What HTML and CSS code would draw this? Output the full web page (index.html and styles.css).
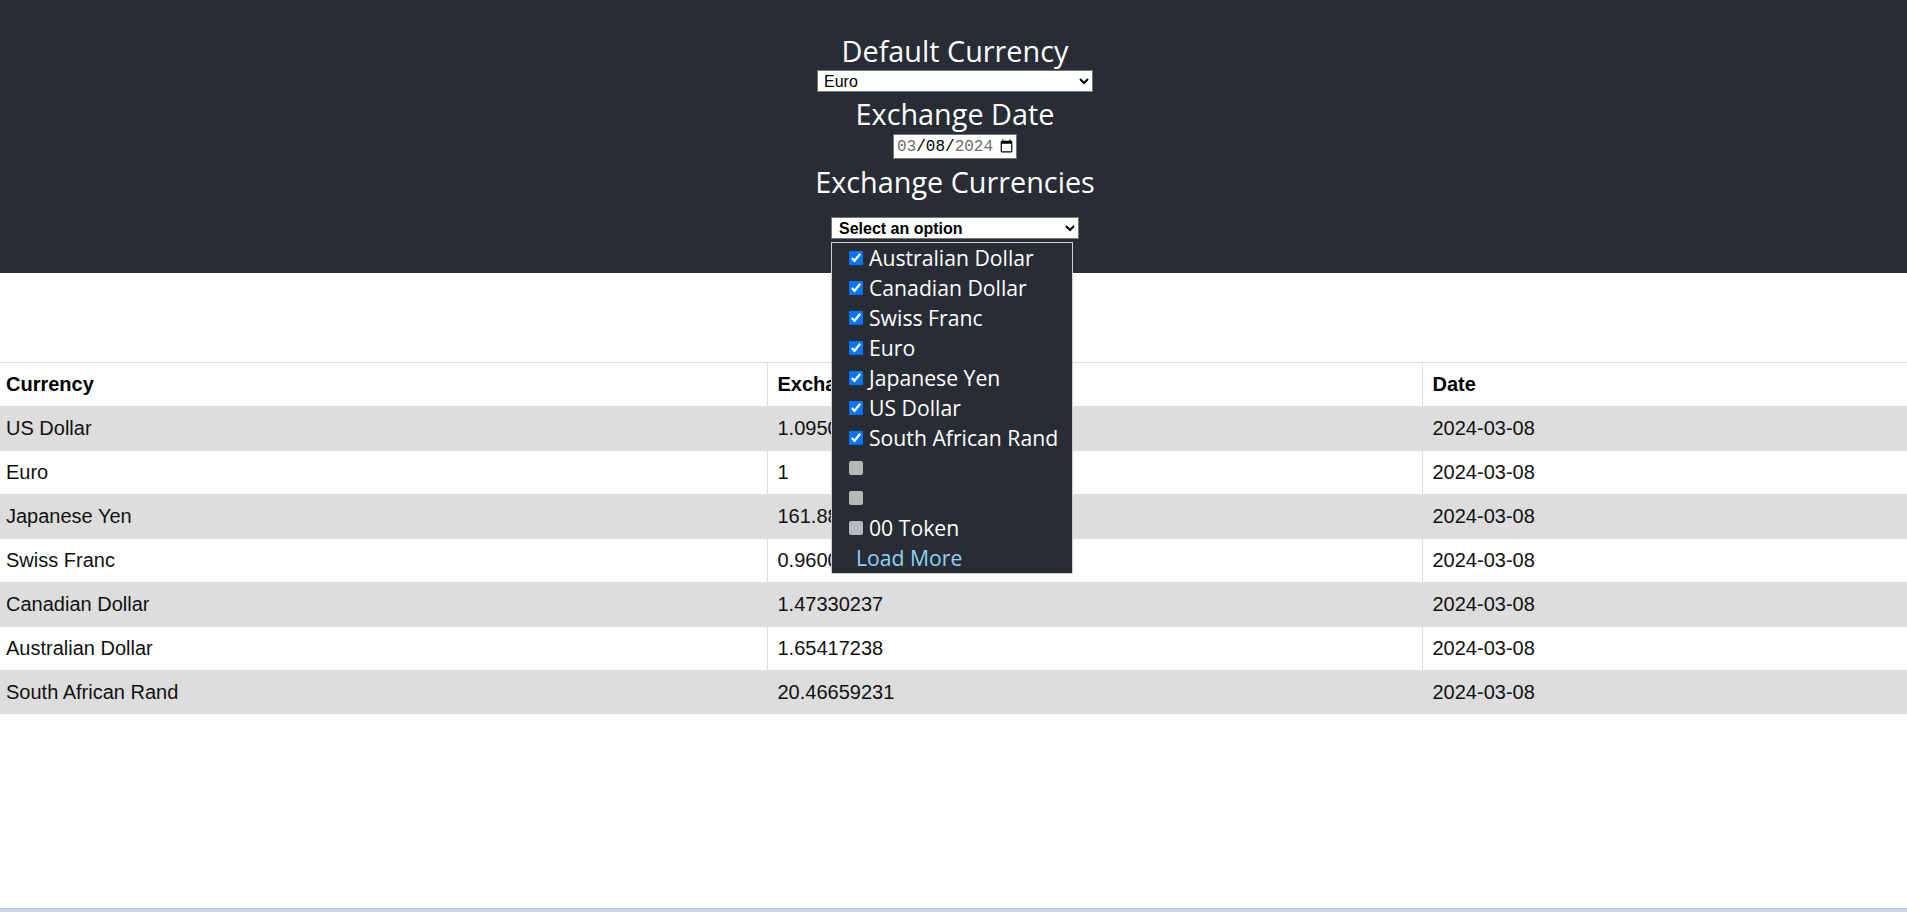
FILE: index.html
```html
<!DOCTYPE html>
<html lang="en">
<head>
<meta charset="utf-8">
<title>Currency Exchange</title>
<link rel="stylesheet" href="styles.css">
</head>
<body>
<div class="app">
  <header class="app-header">
    <div class="field-label">Default Currency</div>
    <select class="currency-select">
      <option>Euro</option>
    </select>
    <div class="field-label gap-3">Exchange Date</div>
    <input class="date-input" type="date" value="2024-03-08">
    <div class="field-label gap-4">Exchange Currencies</div>
    <div class="multi">
      <select class="multi-select">
        <option>Select an option</option>
      </select>
      <div class="multi-panel">
        <label class="opt"><input class="cb" type="checkbox" checked>Australian Dollar</label>
        <label class="opt"><input class="cb" type="checkbox" checked>Canadian Dollar</label>
        <label class="opt"><input class="cb" type="checkbox" checked>Swiss Franc</label>
        <label class="opt"><input class="cb" type="checkbox" checked>Euro</label>
        <label class="opt"><input class="cb" type="checkbox" checked>Japanese Yen</label>
        <label class="opt"><input class="cb" type="checkbox" checked>US Dollar</label>
        <label class="opt"><input class="cb" type="checkbox" checked>South African Rand</label>
        <label class="opt"><input class="cb cb-empty" type="checkbox"></label>
        <label class="opt"><input class="cb cb-empty" type="checkbox"></label>
        <label class="opt"><input class="cb cb-empty" type="checkbox">00 Token</label>
        <a class="load-more">Load More</a>
      </div>
    </div>
  </header>

  <table class="rates">
    <colgroup>
      <col class="col-currency">
      <col class="col-rate">
      <col class="col-date">
    </colgroup>
    <thead>
      <tr><th>Currency</th><th>Exchange Rate</th><th>Date</th></tr>
    </thead>
    <tbody>
      <tr><td>US Dollar</td><td>1.09505862</td><td>2024-03-08</td></tr>
      <tr><td>Euro</td><td>1</td><td>2024-03-08</td></tr>
      <tr><td>Japanese Yen</td><td>161.88093542</td><td>2024-03-08</td></tr>
      <tr><td>Swiss Franc</td><td>0.96004458</td><td>2024-03-08</td></tr>
      <tr><td>Canadian Dollar</td><td>1.47330237</td><td>2024-03-08</td></tr>
      <tr><td>Australian Dollar</td><td>1.65417238</td><td>2024-03-08</td></tr>
      <tr><td>South African Rand</td><td>20.46659231</td><td>2024-03-08</td></tr>
    </tbody>
  </table>
  <div class="hscroll"></div>
</div>
</body>
</html>
```

FILE: styles.css
```css
html, body {
  margin: 0;
  padding: 0;
  background: #ffffff;
}

.app {
  min-height: 100vh;
}

.app-header {
  background: #282c34;
  color: #ffffff;
  display: flex;
  flex-direction: column;
  align-items: center;
  padding: 32px 0 34px 3px;
  font-family: "Open Sans", "Noto Sans", sans-serif;
  font-size: 28.8px;
}

.field-label {
  line-height: 38px;
}

.gap-3 {
  margin-top: 3px;
}

.gap-4 {
  margin-top: 4px;
}

.currency-select {
  box-sizing: border-box;
  width: 276px;
  height: 22px;
  margin: 0;
  padding: 0 2px;
  font: 16px "Liberation Sans", Arial, sans-serif;
  color: #000;
  background: #fff;
  border: 1px solid #767676;
  border-radius: 0;
}

.date-input {
  box-sizing: border-box;
  width: 124px;
  height: 25px;
  margin: 1px 0 0;
  padding: 0 2px 0 3px;
  font: 16px "Liberation Mono", "DejaVu Sans Mono", monospace;
  color: #000;
  background: #fff;
  border: 1px solid #767676;
  border-radius: 0;
}

.date-input::-webkit-datetime-edit {
  padding: 0;
}

.date-input::-webkit-datetime-edit-fields-wrapper {
  padding: 0;
}

.date-input::-webkit-calendar-picker-indicator {
  margin: 0 0 0 3px;
  padding: 0;
  width: 15px;
  height: 15px;
}

.date-input::-webkit-datetime-edit-month-field,
.date-input::-webkit-datetime-edit-year-field {
  color: #6f6f6f;
  padding: 0;
}

.date-input::-webkit-datetime-edit-day-field {
  color: #000;
  padding: 0;
}

.multi {
  position: relative;
  width: 248px;
  margin-top: 16px;
}

.multi-select {
  box-sizing: border-box;
  display: block;
  width: 248px;
  height: 22px;
  margin: 0;
  padding: 0 3px;
  font: bold 16px "Liberation Sans", Arial, sans-serif;
  color: #000;
  background: #fff;
  border: 1px solid #767676;
  border-radius: 0;
}

.multi-panel {
  position: absolute;
  top: 25px;
  left: 0;
  z-index: 5;
  box-sizing: border-box;
  width: 242px;
  background: #282c34;
  border: 1px solid #cfcfcf;
  font-size: 21.2px;
  color: #ffffff;
}

.opt {
  display: flex;
  align-items: center;
  height: 30px;
  line-height: 30px;
  padding-left: 13px;
  white-space: nowrap;
}

.cb {
  width: 14px;
  height: 14px;
  margin: 0 6px 0 4px;
  flex: none;
}

.cb-empty {
  appearance: none;
  -webkit-appearance: none;
  background: #b8b8b8;
  border-radius: 2px;
  border: none;
}

.load-more {
  display: block;
  height: 30px;
  line-height: 30px;
  padding-left: 24px;
  color: #8fd3f5;
  cursor: pointer;
}

.rates {
  width: 100%;
  margin-top: 89px;
  border-collapse: collapse;
  font: 20px "Liberation Sans", Arial, sans-serif;
  color: #111;
}

.col-currency {
  width: 767px;
}

.col-rate {
  width: 655px;
}

.rates th,
.rates td {
  text-align: left;
  padding: 10px 10px;
  line-height: 23px;
  border-top: 1px solid #dddddd;
  border-left: 1px solid #dddddd;
}

.rates th {
  font-weight: bold;
  color: #000;
}

.rates th:first-child,
.rates td:first-child {
  border-left: none;
  padding-left: 6px;
}

.rates tbody tr:nth-child(odd) {
  background: #dddddd;
}

.hscroll {
  position: fixed;
  left: 0;
  right: 0;
  bottom: 0;
  height: 3px;
  background: #cfd6e6;
  border-top: 1px solid #b9c2d6;
}
```
